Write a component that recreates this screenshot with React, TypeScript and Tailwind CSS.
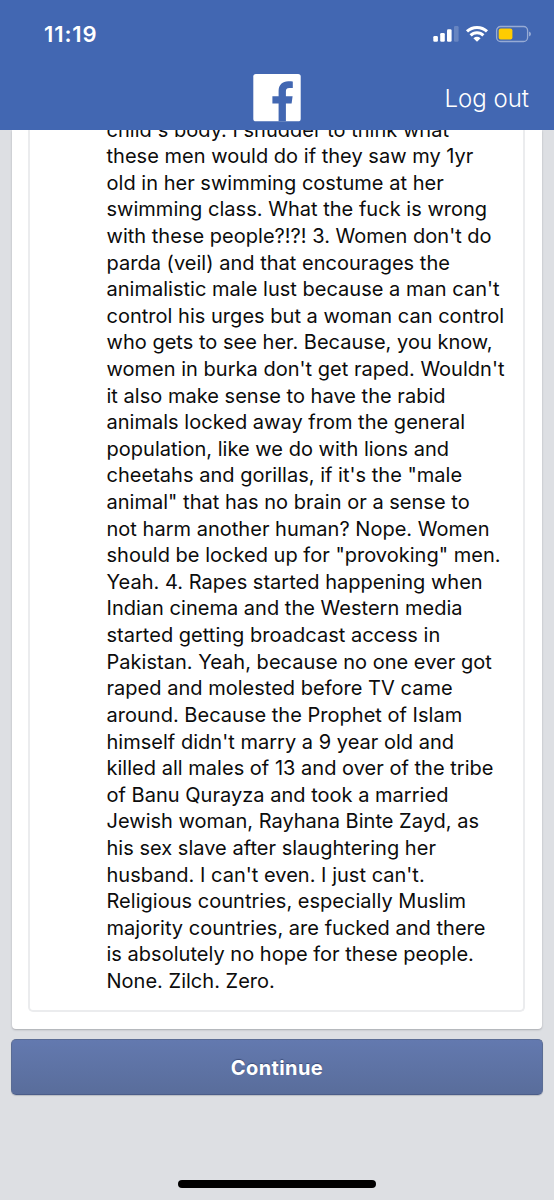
const lines = [
  "child's body. I shudder to think what",
  'these men would do if they saw my 1yr',
  'old in her swimming costume at her',
  'swimming class. What the fuck is wrong',
  "with these people?!?! 3. Women don't do",
  'parda (veil) and that encourages the',
  "animalistic male lust because a man can't",
  'control his urges but a woman can control',
  'who gets to see her. Because, you know,',
  "women in burka don't get raped. Wouldn't",
  'it also make sense to have the rabid',
  'animals locked away from the general',
  'population, like we do with lions and',
  'cheetahs and gorillas, if it\'s the "male',
  'animal" that has no brain or a sense to',
  'not harm another human? Nope. Women',
  'should be locked up for "provoking" men.',
  'Yeah. 4. Rapes started happening when',
  'Indian cinema and the Western media',
  'started getting broadcast access in',
  'Pakistan. Yeah, because no one ever got',
  'raped and molested before TV came',
  'around. Because the Prophet of Islam',
  "himself didn't marry a 9 year old and",
  'killed all males of 13 and over of the tribe',
  'of Banu Qurayza and took a married',
  'Jewish woman, Rayhana Binte Zayd, as',
  'his sex slave after slaughtering her',
  "husband. I can't even. I just can't.",
  'Religious countries, especially Muslim',
  'majority countries, are fucked and there',
  'is absolutely no hope for these people.',
  'None. Zilch. Zero.',
];

function StatusIcons() {
  return (
    <svg width="98" height="18" viewBox="0 0 98 18" fill="none">
      <g fill="#fff">
        <rect x="0.3" y="11" width="4.6" height="5.7" rx="1.3" />
        <rect x="7.2" y="8" width="4.6" height="8.7" rx="1.3" />
        <rect x="14" y="4.3" width="4.6" height="12.4" rx="1.3" />
        <rect x="21" y="1" width="4.6" height="15.7" rx="1.3" opacity=".2" />
      </g>
      <g stroke="#fff" strokeWidth="3">
        <path d="M34 6.4A14.5 14.5 0 0 1 54 6.4" />
        <path d="M37.6 10.4A9 9 0 0 1 50.4 10.4" />
      </g>
      <path d="M40.4 13.2Q44 10.4 47.6 13.2L44 16.8Z" fill="#fff" />
      <rect x="63.6" y="1.5" width="31" height="15" rx="4" stroke="#fff" strokeOpacity=".45" strokeWidth="1.3" />
      <rect x="65.7" y="3.5" width="13.7" height="11" rx="2" fill="#fc0" />
      <path d="M96.1 6.4v5.2q1.8-.8 1.8-2.6T96.1 6.4Z" fill="#fff" opacity=".5" />
    </svg>
  );
}

function FacebookLogo() {
  return (
    <svg width="48" height="48" viewBox="0 0 48 48">
      <rect x="0.3" width="47.4" height="47.3" rx="2.6" fill="#fff" />
      <path d="M25.6 47.3V29.5H19.4V22.2H25.6V17C25.6 10.6 29.6 7.2 35.2 7.2C37.4 7.2 39.3 7.4 39.8 7.4V14H36.4C33.5 14 32.9 15.4 32.9 17.5V22.2H39.6L38.6 29.5H32.9V47.3Z" fill="#4267b2" />
    </svg>
  );
}

export default function App() {
  return (
    <div className="relative flex h-[1200px] w-[554px] flex-col overflow-hidden bg-[#dddfe3] font-['Inter','Liberation_Sans',sans-serif]">
      <header className="z-10 h-[130px] shrink-0 bg-[#4267b2] text-white">
        <div className="flex h-[68px] items-center justify-between pr-[23px] pl-[44px]">
          <span className="pt-px text-[22px] font-semibold tracking-[0.9px]">11:19</span>
          <StatusIcons />
        </div>
        <div className="grid h-[60px] grid-cols-[1fr_48px_1fr] items-center">
          <span />
          <div className="-mt-px"><FacebookLogo /></div>
          <span className="pt-px pr-[25px] text-right text-[24px] font-[350]">Log out</span>
        </div>
      </header>
      <main className="flex flex-col px-[11px]">
        <section className="mx-px h-[899px] rounded-b-[4px] bg-white pr-[17px] pb-[17px] pl-[16px] shadow-[0_1px_2px_#a9abb0]">
          <div className="flow-root h-[882px] rounded-b-[5px] border-x-2 border-b-2 border-[#ebecee] pl-[76.5px]">
            <div className="-mt-[13.5px] text-[20px] leading-[26.61px] tracking-[0.02px] whitespace-nowrap text-[#0c0c0c]">
              {lines.map((line) => (
                <div key={line}>{line}</div>
              ))}
            </div>
          </div>
        </section>
        <button className="mt-[10px] h-[56px] rounded-[5px] border border-[#5a6c94] border-b-[#4b5d89] bg-linear-to-b from-[#6379af] to-[#596d9b] pt-px text-[20px] font-bold tracking-[0.4px] text-white shadow-[0_1px_1px_#b9bcc3] [text-shadow:0_-1px_1px_#3b4d7a]">
          Continue
        </button>
      </main>
      <div className="absolute bottom-[12px] left-[178px] h-[8px] w-[198px] rounded-full bg-black" />
    </div>
  );
}
